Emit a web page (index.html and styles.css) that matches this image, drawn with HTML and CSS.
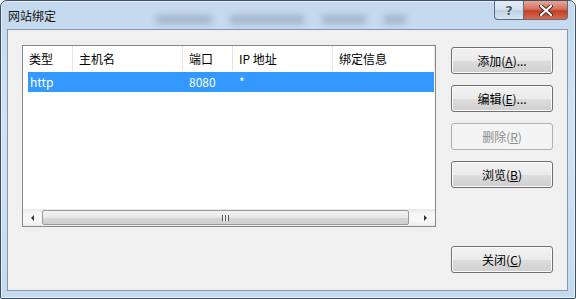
FILE: index.html
```html
<!DOCTYPE html>
<html lang="zh-CN">
<head>
  <meta charset="UTF-8">
  <title>网站绑定</title>
  <meta name="viewport" content="width=device-width, initial-scale=1.0">
  <link rel="stylesheet" href="styles.css">
</head>
<body>

  <div class="window">
    <div class="titlebar">
      <span class="title">网站绑定</span>
      <div class="ghost">
        <span class="blob b1"></span>
        <span class="blob b2"></span>
        <span class="blob b3"></span>
        <span class="blob b4"></span>
      </div>
      <div class="caption">
        <span class="cap-btn help">?</span>
        <span class="cap-btn close">
          <svg width="14" height="11" viewBox="0 0 14 11">
            <path d="M2 1 L12 10 M12 1 L2 10" stroke="#3a2a2a" stroke-width="4" stroke-linecap="round"/>
            <path d="M2 1 L12 10 M12 1 L2 10" stroke="#fff" stroke-width="2.2" stroke-linecap="round"/>
          </svg>
        </span>
      </div>
    </div>

    <div class="client">
      <div class="listview">
        <div class="lv-header">
          <div class="col c1">类型</div>
          <div class="col c2">主机名</div>
          <div class="col c3">端口</div>
          <div class="col c4">IP 地址</div>
          <div class="col c5">绑定信息</div>
        </div>
        <div class="lv-body">
          <div class="lv-row selected">
            <div class="col c1">http</div>
            <div class="col c2"></div>
            <div class="col c3">8080</div>
            <div class="col c4">*</div>
            <div class="col c5"></div>
          </div>
        </div>
        <div class="hscroll">
          <span class="arrow left"></span>
          <div class="track">
            <div class="thumb"><span class="grip"></span></div>
          </div>
          <span class="arrow right"></span>
        </div>
      </div>

      <div class="side">
        <button class="btn">添加(<u>A</u>)...</button>
        <button class="btn">编辑(<u>E</u>)...</button>
        <button class="btn" disabled>删除(<u>R</u>)</button>
        <button class="btn">浏览(<u>B</u>)</button>
        <button class="btn close-btn">关闭(<u>C</u>)</button>
      </div>
    </div>
  </div>

</body>
</html>
```

FILE: styles.css
```css
body {
  margin: 0;
  padding: 0;
  font-family: "Noto Sans CJK SC", "Noto Sans", sans-serif;
  font-size: 12px;
  color: #000;
  background: #f0f0f0;
}
.window {
  width: 576px;
  height: 299px;
  box-sizing: border-box;
  display: flex;
  flex-direction: column;
  border: 1px solid #3f4f63;
  border-radius: 7px 7px 2px 2px;
  background: linear-gradient(180deg, #c3d8ee 0%, #d3e3f4 40%, #c6daef 100%);
  box-shadow: inset 0 0 0 1px #e6f0fa;
  overflow: hidden;
}
.titlebar {
  height: 28px;
  display: flex;
  align-items: flex-start;
}
.title {
  margin: 7px 0 0 7px;
  line-height: 15px;
  color: #111;
}
.ghost {
  display: flex;
  margin: 14px 0 0 100px;
  filter: blur(3px);
}
.blob {
  height: 9px;
  background: #6f8196;
  opacity: 0.4;
  margin-right: 18px;
}
.b1 { width: 56px; }
.b2 { width: 74px; }
.b3 { width: 44px; }
.b4 { width: 22px; }
.caption {
  display: flex;
  margin-left: auto;
  margin-right: 7px;
}
.cap-btn {
  height: 19px;
  display: flex;
  align-items: center;
  justify-content: center;
  border: 1px solid #5d6b7d;
  border-top: none;
  box-sizing: border-box;
}
.help {
  width: 29px;
  border-radius: 0 0 0 4px;
  border-right: none;
  background: linear-gradient(180deg, #e4edf7 0%, #d3e0ee 50%, #bfd0e3 51%, #d6e4f2 100%);
  color: #4b5b6e;
  font-family: "DejaVu Sans", sans-serif;
  font-weight: bold;
  font-size: 13px;
  text-shadow: 0 0 2px #fff;
}
.close {
  width: 45px;
  border-radius: 0 0 4px 0;
  background: linear-gradient(180deg, #e8a898 0%, #d4705c 45%, #c23f27 55%, #d96a4e 100%);
}
.client {
  flex: 1;
  display: flex;
  margin: 0 7px 7px 6px;
  padding: 15px 14px 17px 14px;
  background: #f0f0f0;
  border: 1px solid #8597ac;
}
.listview {
  width: 414px;
  height: 182px;
  box-sizing: border-box;
  display: flex;
  flex-direction: column;
  border: 1px solid #828790;
  background: #fff;
}
.lv-header {
  display: flex;
  height: 25px;
  line-height: 26px;
  flex-shrink: 0;
}
.lv-header .col {
  border-right: 1px solid #e5e5e5;
  box-sizing: border-box;
  padding-left: 6px;
}
.c1 { width: 50px; }
.c2 { width: 110px; }
.c3 { width: 50px; }
.c4 { width: 100px; }
.c5 { width: 102px; }
.lv-body {
  flex: 1;
  padding-top: 1px;
}
.lv-row {
  display: flex;
  height: 20px;
  line-height: 20px;
  margin: 0 1px 0 5px;
}
.lv-row .col {
  box-sizing: border-box;
  padding-left: 6px;
}
.lv-row .c1 {
  width: 45px;
  padding-left: 2px;
}
.lv-row .c5 { flex: 1; }
.selected {
  background: #3399ff;
  color: #fff;
}
.hscroll {
  height: 17px;
  display: flex;
  align-items: center;
  background: linear-gradient(180deg, #e9e9e9, #f7f7f7 30%, #f7f7f7 70%, #ececec);
}
.arrow {
  width: 19px;
  height: 15px;
  display: flex;
  align-items: center;
  justify-content: center;
}
.arrow::after {
  content: "";
  border: 3px solid transparent;
}
.arrow.left::after {
  border-right-color: #333;
  border-left: none;
}
.arrow.right::after {
  border-left-color: #333;
  border-right: none;
}
.track {
  flex: 1;
  display: flex;
}
.thumb {
  width: 367px;
  height: 15px;
  box-sizing: border-box;
  border: 1px solid #999;
  border-radius: 2px;
  background: linear-gradient(180deg, #f3f3f3 0%, #e8e8e8 50%, #d6d6d6 51%, #cfcfcf 100%);
  display: flex;
  align-items: center;
  justify-content: center;
}
.grip {
  width: 7px;
  height: 6px;
  background: repeating-linear-gradient(90deg, #555 0 1px, #eee 1px 3px);
}
.side {
  display: flex;
  flex-direction: column;
  margin-left: 15px;
  padding-top: 2px;
}
.btn {
  width: 102px;
  height: 27px;
  margin-bottom: 11px;
  padding: 0;
  font-family: inherit;
  font-size: 12px;
  color: #000;
  border: 1px solid #707070;
  border-radius: 3px;
  background: linear-gradient(180deg, #f2f2f2 0%, #ebebeb 50%, #dddddd 51%, #cfcfcf 100%);
  box-shadow: inset 0 0 0 1px #fbfbfb;
}
.btn:disabled {
  color: #8d8d8d;
  border-color: #adb2b5;
  background: #f4f4f4;
  box-shadow: none;
}
.close-btn {
  margin-top: auto;
  margin-bottom: 0;
}
```
